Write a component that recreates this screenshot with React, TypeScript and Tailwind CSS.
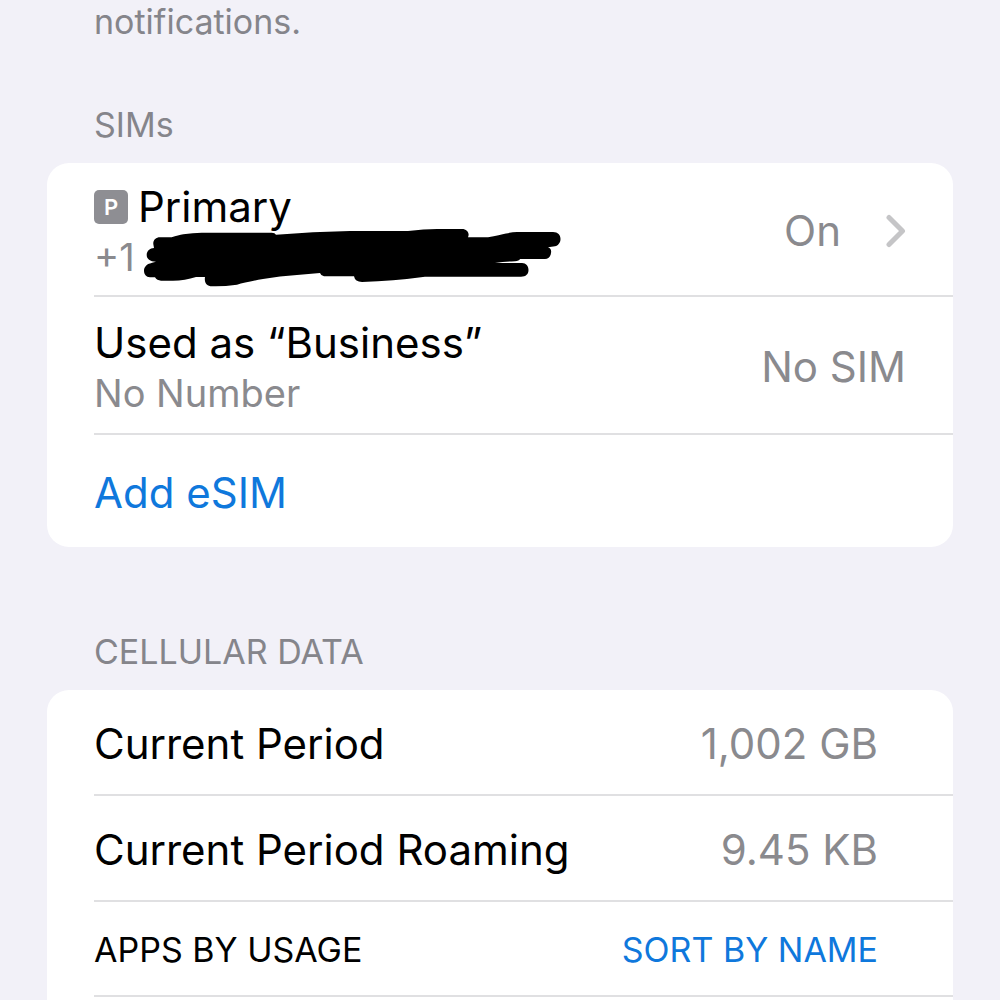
import React from 'react';

interface RowProps {
  children: React.ReactNode;
  className?: string;
  last?: boolean;
}

const Row: React.FC<RowProps> = ({ children, className = '', last }) => (
  <li className={`ml-[47px] flex items-center justify-between pt-[3px] ${last ? '' : 'border-b-2 border-[#e0e0e2]'} ${className}`}>
    {children}
  </li>
);

const SectionTitle: React.FC<{ children: React.ReactNode }> = ({ children }) => (
  <h2 className="px-[47px] text-[34px] leading-[44px] text-[#85858b]">{children}</h2>
);

const Chevron = () => (
  <svg className="h-[34px] w-5" viewBox="0 0 20 34" fill="none" stroke="#c5c5c7" strokeWidth="5" strokeLinecap="round" strokeLinejoin="round" aria-hidden="true">
    <path d="M3 3.500 16.500 17 3 30.500" />
  </svg>
);

// Marker scribble hiding the rest of the phone number
const Scribble = () => (
  <svg className="absolute left-[46px] -top-1.5 h-[60px] w-[424px]" viewBox="0 0 424 60" aria-hidden="true">
    <path
      fill="#000"
      d="M13.3 17C13 13 16 10.3 20 10.3H31.7C36 9 40 8 43.3 7.3Q53 5.7 61.7 5.7H131.7Q135 5.7 136 7.7L173 5.3 210 4H268Q284 2 297 2H322C327 2 330 6 328 10.3H348Q360 8 366 6.5T377 5H413C418 5 420.500 8 420.500 12 420.500 16 418 18.500 415 19.300L408 20.300C411 21 411.500 24 411 26 410.500 30 408 32 405 32H380Q379 34 375 34.200 365 34.500 355 36H382C386 36 388.500 39 388.500 43S386 49.700 381 49.700H285Q268 52 253 53.300T222 55Q215 55 214 49.300H184Q181 49 180 46L157 48Q140 49 123 52T97 57.700Q83 59.700 72 59.300C67 59 64 56 65 50H56Q45 53.700 33 53.700H21Q17 53.500 15 50.300H10C6 50 4 47 4 43.700 4 40 7 37 10 36.500 12 35.500 14 35 16 34.700 10 34.500 6.700 32 6.700 28 6.700 24 10 21 14 21Z"
    />
  </svg>
);

const usage = [
  { label: 'Current Period', value: '1,002 GB' },
  { label: 'Current Period Roaming', value: '9.45 KB' },
];

const App: React.FC = () => {
  return (
    <main className="flex min-h-screen flex-col bg-[#f2f1f8] px-[47px] font-['Inter',sans-serif] text-black">
      <p className="px-[47px] text-[34px] leading-[44px] text-[#85858b]">notifications.</p>

      <section className="mt-[59px]">
        <SectionTitle>SIMs</SectionTitle>
        <ul className="mt-4 rounded-[22px] bg-white">
          <Row className="h-[134px]">
            <a href="#primary" className="flex flex-1 items-center justify-between pr-[47px]">
              <span>
                <span className="flex items-center gap-[10px] text-[42px] leading-[52px]">
                  <span className="flex size-[34px] items-center justify-center rounded-[5px] bg-[#8e8e93] text-[22px] font-semibold text-white">P</span>
                  Primary
                </span>
                <span className="relative block text-[38px] leading-[48px] text-[#8a8a8e]">
                  +1
                  <Scribble />
                </span>
              </span>
              <span className="flex items-center gap-[45px] text-[42px] leading-[52px] text-[#8a8a8e]">
                On
                <Chevron />
              </span>
            </a>
          </Row>
          <Row className="h-[138px] pr-[47px]">
            <div>
              <p className="text-[42px] leading-[52px]">Used as “Business”</p>
              <p className="text-[38px] leading-[48px] text-[#8a8a8e]">No Number</p>
            </div>
            <span className="text-[42px] leading-[52px] text-[#8a8a8e]">No SIM</span>
          </Row>
          <Row className="h-[112px]" last>
            <button type="button" className="text-[42px] leading-[52px] text-[#0f78dc]">Add eSIM</button>
          </Row>
        </ul>
      </section>

      <section className="mt-[83px] flex flex-1 flex-col">
        <SectionTitle>CELLULAR DATA</SectionTitle>
        <ul className="mt-4 flex-1 rounded-t-[22px] bg-white">
          {usage.map((item) => (
            <Row key={item.label} className="h-[106px] pr-[75px] text-[42px] leading-[52px]">
              <span>{item.label}</span>
              <span className="text-[#8a8a8e]">{item.value}</span>
            </Row>
          ))}
          <Row className="h-[95px] pr-[75px] text-[34px] leading-[44px]">
            <h3>APPS BY USAGE</h3>
            <button type="button" className="text-[#0f78dc]">SORT BY NAME</button>
          </Row>
        </ul>
      </section>
    </main>
  );
};

export default App;
